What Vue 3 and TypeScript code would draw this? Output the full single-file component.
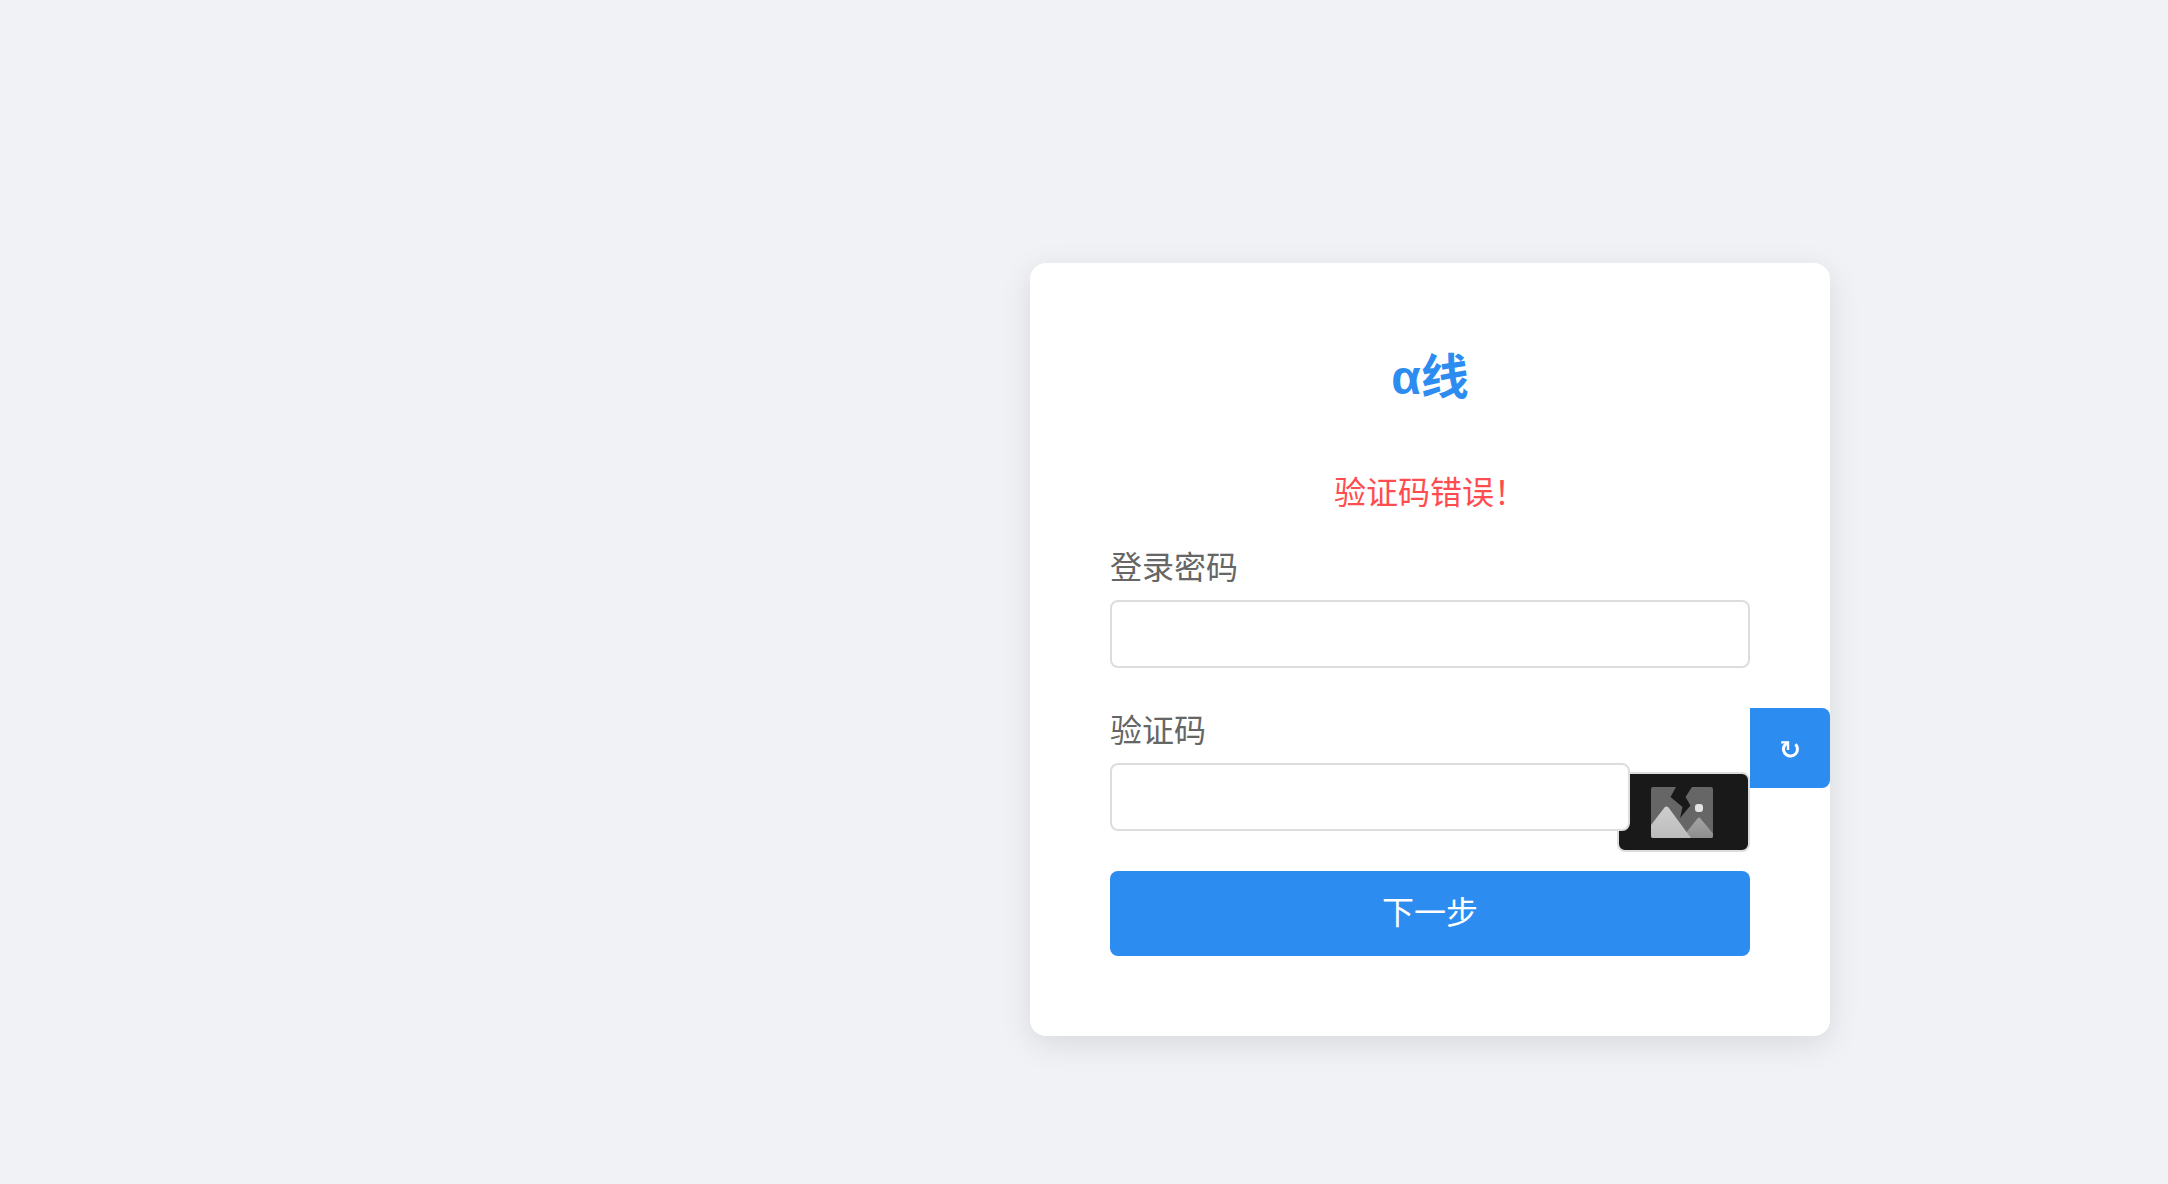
<script setup lang="ts">
import { ref } from 'vue'

const password = ref('')
const captcha = ref('')
const error = ref('验证码错误！')

function refreshCaptcha(): void {
  captcha.value = ''
}
</script>

<template>
  <main class="page">
    <form class="card" @submit.prevent>
      <h2 class="title">α线</h2>
      <p class="error" role="alert">{{ error }}</p>

      <div class="group">
        <label for="password">登录密码</label>
        <input id="password" v-model="password" type="password" />
      </div>

      <div class="group">
        <label for="captcha">验证码</label>
        <input id="captcha" v-model="captcha" class="short" type="text" autocomplete="off" />
        <div class="captcha-image">
          <svg viewBox="0 0 62 51" width="62" height="51" aria-hidden="true">
            <defs>
              <linearGradient id="front" x1="0" y1="0" x2="0" y2="1">
                <stop offset="0" stop-color="#cecece" />
                <stop offset="1" stop-color="#bcbcbc" />
              </linearGradient>
              <linearGradient id="back" x1="0" y1="0" x2="0" y2="1">
                <stop offset="0" stop-color="#a4a4a4" />
                <stop offset="1" stop-color="#8e8e8e" />
              </linearGradient>
              <clipPath id="frame"><rect width="62" height="51" rx="2" /></clipPath>
            </defs>
            <g clip-path="url(#frame)">
              <rect width="62" height="51" fill="#666" />
              <path d="M34 47 46.500 31.500Q48 29.500 49.500 31.500L62 46.500V51H34Z" fill="url(#back)" />
              <path d="M0 38 13.500 20.500Q15.500 18.500 17.500 20.500L40 51H0Z" fill="url(#front)" />
              <path d="M25 0H41L34.500 10 39.500 18.500 29 31 31.500 20 19.500 10Z" fill="#191919" />
              <rect x="44" y="17" width="8" height="8" rx="3" fill="#e4e4e4" />
            </g>
          </svg>
        </div>
        <button class="refresh" type="button" aria-label="刷新验证码" @click="refreshCaptcha">
          <svg viewBox="0 0 20 22" width="20" height="22" fill="none" stroke="#fff" stroke-width="3" aria-hidden="true">
            <path d="M15.500 7.200A7 7 0 1 1 4.400 8.600L8 5" />
            <path d="M1.200 5.400H8V13" stroke-width="2.400" />
          </svg>
        </button>
      </div>

      <button class="submit" type="submit">下一步</button>
    </form>
  </main>
</template>

<style>
body {
  background: #f0f2f6;
}
</style>

<style scoped>
.page {
  box-sizing: border-box;
  display: flex;
  justify-content: flex-end;
  align-items: flex-start;
  min-height: 100vh;
  padding: 263px 338px 40px 40px;
  font-family: "Liberation Sans", "Noto Sans CJK SC", sans-serif;
  font-size: 32px;
  line-height: 47px;
}

.card {
  box-sizing: border-box;
  width: 100%;
  max-width: 800px;
  padding: 80px;
  border-radius: 16px;
  background: #fff;
  box-shadow: 0 8px 32px rgba(0, 0, 0, 0.1);
}

.title {
  margin: 0 0 57px;
  color: #2d8cf0;
  font-size: 48px;
  line-height: 70px;
  text-align: center;
}

.error {
  margin: 0 0 28px;
  color: #ff4d4f;
  text-align: center;
}

.group {
  position: relative;
  margin-bottom: 40px;
}

label {
  display: block;
  margin-bottom: 8px;
  color: #666;
}

input {
  position: relative;
  z-index: 1;
  display: block;
  box-sizing: border-box;
  width: 100%;
  height: 68px;
  padding: 0 16px;
  border: 2px solid #ddd;
  border-radius: 8px;
  background: #fff;
  font: inherit;
}

.short {
  width: calc(100% - 120px);
}

.captcha-image {
  position: absolute;
  top: 64px;
  right: 0;
  display: flex;
  align-items: center;
  justify-content: center;
  box-sizing: border-box;
  width: 133px;
  height: 80px;
  padding-right: 3px;
  border: 2px solid #ddd;
  border-radius: 8px;
  background: #191919;
}

button {
  padding: 0;
  border: 0;
  background: #2d8cf0;
  color: #fff;
  font: inherit;
  cursor: pointer;
}

.refresh {
  position: absolute;
  top: 0;
  left: 100%;
  display: flex;
  align-items: center;
  justify-content: center;
  width: 80px;
  height: 80px;
  border-radius: 0 8px 8px 0;
}

.submit {
  display: block;
  width: 100%;
  padding: 19px 0;
  border-radius: 8px;
}
</style>
